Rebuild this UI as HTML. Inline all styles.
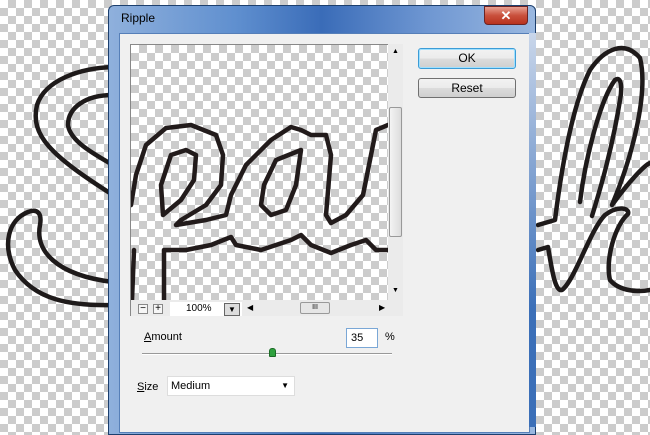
<!DOCTYPE html><html><head><style>
*{margin:0;padding:0;box-sizing:border-box}
body{width:650px;height:427px;overflow:hidden;position:relative;font-family:"Liberation Sans",sans-serif;font-size:11px;
background-color:#fff;background-image:linear-gradient(45deg,#ccc 25%,transparent 25%,transparent 75%,#ccc 75%),linear-gradient(45deg,#ccc 25%,transparent 25%,transparent 75%,#ccc 75%);background-size:16px 16px;background-position:0 0,8px 8px}
.abs{position:absolute}
.chk{background-color:#fff;background-image:linear-gradient(45deg,#ccc 25%,transparent 25%,transparent 75%,#ccc 75%),linear-gradient(45deg,#ccc 25%,transparent 25%,transparent 75%,#ccc 75%);background-size:16px 16px;background-position:0 0,8px 8px}
.btn{position:absolute;border:1px solid #707070;border-radius:3px;background:linear-gradient(#f2f2f2,#ebebeb 50%,#dcdcdc 51%,#cfcfcf);text-align:center;font-size:12px;line-height:18px}
</style></head><body>
<svg class="abs" style="left:0;top:0" width="650" height="427" fill="none" stroke="#1e1a1a" stroke-width="4.5" stroke-linecap="round" stroke-linejoin="round">
<path d="M113,67 C80,68 45,80 37,105 C30,135 50,155 113,195"/>
<path d="M113,95 C85,95 68,108 68,125 C70,140 90,152 113,165"/>
<path d="M113,305 C70,306 35,300 15,270 C2,245 8,220 28,212 C38,208 42,214 40,225 C35,250 55,275 113,282"/>
<path d="M538,225 L555,220 C560,180 570,110 590,70 C605,48 625,40 640,58 C648,90 635,150 612,205 C630,180 645,165 650,163"/>
<path d="M580,202 C585,160 600,100 615,80 C622,75 622,90 620,100 C612,150 600,190 592,216"/>
<path d="M538,250 L548,247 C552,270 555,292 562,290 C575,280 590,230 605,215 C618,205 630,208 628,214 C615,225 605,260 610,280 C620,292 640,292 650,290"/>
</svg>
<div class="abs" style="left:108px;top:5px;width:428px;height:430px;border:1px solid #1c3f6e;border-radius:6px 6px 0 0;background:linear-gradient(90deg,#8fb0dc,#5f8fcf 30%,#3a6cb8 50%,#6f97d2 75%,#9ab8e0)"></div>
<div class="abs" style="left:121px;top:11px;font-size:12px;color:#000">Ripple</div>
<div class="abs" style="left:484px;top:6px;width:44px;height:19px;border:1px solid #6b2424;border-radius:0 0 4px 4px;background:linear-gradient(#e8a091,#c9503c 50%,#b8321e);color:#fff;text-align:center;font-weight:bold;font-size:13px;line-height:17px">✕</div>
<div class="abs" style="left:119px;top:33px;width:411px;height:400px;background:#f0f0f0;border:1px solid #567fb8"></div>
<div class="abs chk" style="left:130px;top:44px;width:258px;height:256px;border-left:1px solid #888;border-top:1px solid #888"></div>
<svg class="abs" style="left:131px;top:45px" width="257" height="255" fill="none" stroke="#221b1b" stroke-width="4.5" stroke-linejoin="round" stroke-linecap="round">
<path d="M0,160 L5,130 L15,100 L35,83 L60,80 L85,90 L92,110 L90,140 L75,160 L50,175 L45,180 L75,175 L95,170 L100,150 L115,120 L140,95 L160,82 L170,85 L180,90 L195,90 L200,110 L195,170 L200,178 L215,170 L232,150 L240,110 L245,85 L257,80"/>
<path d="M32,170 L30,140 L40,110 L55,105 L65,110 L63,135 L50,155 Z"/>
<path d="M140,170 L130,160 L133,140 L145,115 L170,105 L165,140 L155,165 Z"/>
<path d="M3,205 L1,255 M33,255 L33,205 L55,205 L80,200 L100,192 L105,200 L130,205 L160,195 L170,190 L180,200 L200,208 L220,200 L235,195 L245,205 L257,205"/>
</svg>
<div class="abs" style="left:388px;top:44px;width:15px;height:256px;background:#ebebeb"></div>
<div class="abs" style="left:392px;top:48px;font-size:7px">▲</div>
<div class="abs" style="left:392px;top:287px;font-size:7px">▼</div>
<div class="abs" style="left:389px;top:107px;width:13px;height:130px;border:1px solid #999;border-radius:2px;background:linear-gradient(90deg,#f4f4f4,#dcdcdc)"></div>
<div class="abs" style="left:130px;top:300px;width:273px;height:16px;background:#ebebeb;border-left:1px solid #888"></div>
<div class="abs" style="left:138px;top:304px;width:10px;height:10px;border:1px solid #888;font-size:10px;line-height:8px;text-align:center;background:#f6f6f6">−</div>
<div class="abs" style="left:153px;top:304px;width:10px;height:10px;border:1px solid #888;font-size:10px;line-height:8px;text-align:center;background:#f6f6f6">+</div>
<div class="abs" style="left:170px;top:302px;width:72px;height:14px;background:#fff;font-size:10px;line-height:14px;padding-left:16px">100%</div>
<div class="abs" style="left:224px;top:303px;width:16px;height:13px;border:1px solid #666;background:#ddd;font-size:8px;text-align:center;line-height:12px">▼</div>
<div class="abs" style="left:247px;top:303px;font-size:8px">◀</div>
<div class="abs" style="left:379px;top:303px;font-size:8px">▶</div>
<div class="abs" style="left:300px;top:302px;width:30px;height:12px;border:1px solid #999;border-radius:2px;background:#e6e6e6;font-size:7px;text-align:center;line-height:10px">III</div>
<div class="btn" style="left:418px;top:48px;width:98px;height:21px;border-color:#3c9cd6;box-shadow:inset 0 0 0 1px #9fe0ff">OK</div>
<div class="btn" style="left:418px;top:78px;width:98px;height:20px">Reset</div>
<div class="abs" style="left:144px;top:331px;font-size:11px"><u>A</u>mount</div>
<div class="abs" style="left:346px;top:328px;width:32px;height:20px;border:1px solid #7aa7d6;background:#fff;padding:3px 0 0 4px">35</div>
<div class="abs" style="left:385px;top:331px">%</div>
<div class="abs" style="left:142px;top:353px;width:250px;height:2px;border-top:1px solid #999;border-bottom:1px solid #fff"></div>
<div class="abs" style="left:269px;top:348px;width:7px;height:9px;background:#2fa13e;border:1px solid #1a6a25;border-radius:3px 3px 1px 1px"></div>
<div class="abs" style="left:137px;top:381px"><u>S</u>ize</div>
<div class="abs" style="left:167px;top:376px;width:128px;height:20px;background:#fff;border:1px solid #ddd;padding:3px 0 0 3px">Medium<span style="position:absolute;right:5px;top:4px;font-size:8px">▼</span></div>
<div class="abs" style="left:529px;top:33px;width:7px;height:394px;background:linear-gradient(#c9d6ea,#3b6fb8 70%)"></div>
</body></html>
